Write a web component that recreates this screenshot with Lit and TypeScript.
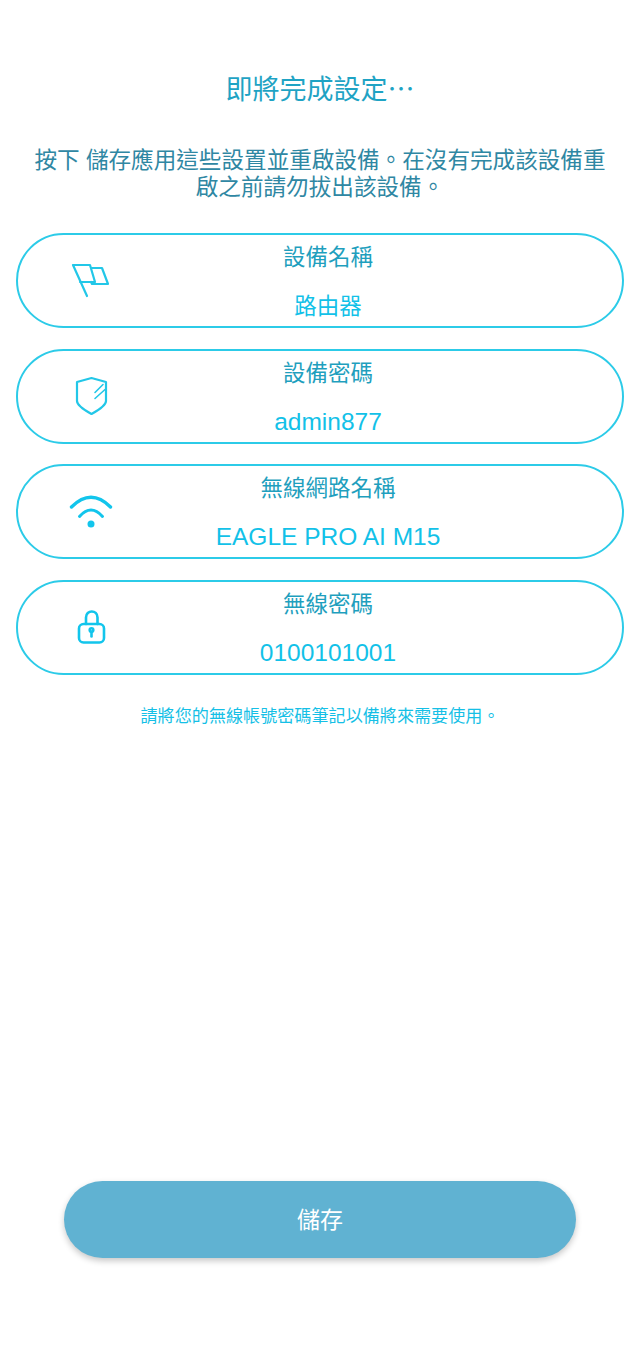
import { LitElement, html, css } from "lit";
import { customElement } from "lit/decorators.js";

const flag = html`<svg width="44" height="44" viewBox="0 0 44 44" fill="none" stroke="#22c7e8" stroke-width="2.200" stroke-linejoin="round" stroke-linecap="round"><path d="M18 37 L4 6 H21 L26 23 H11"/><path d="M23 9 H33 L39 25 H23 L22 23"/></svg>`;
const shield = html`<svg width="44" height="44" viewBox="0 0 44 44" fill="none" stroke="#22c7e8" stroke-width="2.200" stroke-linejoin="round" stroke-linecap="round"><path d="M22.500 4 L37 8 V27 C37 32 28 37 22.500 40 C17 37 8 32 8 27 V8 Z"/><path d="M26 18.500 L34 10.500M26 24.500 L36 15.500" stroke-width="1.600"/></svg>`;
const wifi = html`<svg width="44" height="44" viewBox="0 0 44 44" fill="none" stroke="#12c5ec" stroke-width="3.400" stroke-linecap="round"><path d="M2.500 17 Q22 -2.400 41.500 17"/><path d="M10.500 26.500 Q22 13.500 33.500 26.500" stroke-width="3"/><circle cx="22" cy="34" r="3.500" fill="#12c5ec" stroke="none"/></svg>`;
const lock = html`<svg width="44" height="44" viewBox="0 0 44 44" fill="none" stroke="#12c5ec" stroke-width="2.600" stroke-linecap="round"><rect x="10" y="19" width="25" height="18.500" rx="4.500"/><path d="M17 19 V12.500 C17 4.500 28.500 4.500 28.500 12.500 V19"/><circle cx="22.500" cy="25" r="1.800"/><path d="M22.500 26.500 V31.500"/></svg>`;

const rows = [
  { icon: flag, label: "設備名稱", value: "路由器", cjk: true },
  { icon: shield, label: "設備密碼", value: "admin877", cjk: false },
  { icon: wifi, label: "無線網路名稱", value: "EAGLE PRO AI M15", cjk: false },
  { icon: lock, label: "無線密碼", value: "0100101001", cjk: false },
];

@customElement("app-root")
export class AppRoot extends LitElement {
  static styles = css`
    :host {
      display: flex;
      flex-direction: column;
      width: 640px;
      height: 1352px;
      background: #fff;
      font-family: "Liberation Sans", "Noto Sans CJK TC", sans-serif;
      box-sizing: border-box;
    }
    h1 {
      margin: 70px 0 0;
      font-family: "Noto Sans CJK TC", sans-serif;
      font-size: 27px;
      line-height: 36px;
      font-weight: 400;
      color: #1fa3c4;
      text-align: center;
    }
    .intro {
      margin: 41px 32px 0;
      font-size: 22.6px;
      line-height: 27px;
      color: #2f87a3;
      text-align: center;
    }
    .cards {
      display: flex;
      flex-direction: column;
      gap: 20.6px;
      margin: 32px 16px 0;
    }
    .card {
      display: grid;
      grid-template-columns: 146px 1fr 130px;
      align-items: center;
      height: 95px;
      box-sizing: border-box;
      border: 2px solid #2ccbe8;
      border-radius: 48px;
    }
    .icon {
      display: flex;
      justify-content: center;
    }
    .text {
      display: flex;
      flex-direction: column;
      align-items: center;
      gap: 17px;
      padding-top: 4px;
      white-space: nowrap;
    }
    .label {
      font-size: 22.5px;
      line-height: 32px;
      color: #1f9fbe;
    }
    .value {
      margin: -1px 0 1px;
      font-size: 24.5px;
      line-height: 32px;
      color: #12c1e8;
    }
    .value.cjk {
      margin: 0;
      font-size: 22.5px;
    }
    .note {
      margin: 30px 0 0;
      font-size: 17.1px;
      line-height: 24px;
      color: #15bfe6;
      text-align: center;
    }
    button {
      margin: auto 64px 94px;
      height: 77px;
      padding: 0 0 3px;
      border: 0;
      border-radius: 39px;
      background: #60b2d2;
      color: #fff;
      font: inherit;
      font-size: 23px;
      box-shadow: 0 3px 6px rgba(0, 0, 0, 0.22);
    }
  `;

  render() {
    return html`
      <h1>即將完成設定…</h1>
      <p class="intro">按下 儲存應用這些設置並重啟設備。在沒有完成該設備重啟之前請勿拔出該設備。</p>
      <div class="cards">
        ${rows.map(
          (r) => html`<div class="card">
            <div class="icon">${r.icon}</div>
            <div class="text">
              <div class="label">${r.label}</div>
              <div class="value ${r.cjk ? "cjk" : ""}">${r.value}</div>
            </div>
          </div>`
        )}
      </div>
      <p class="note">請將您的無線帳號密碼筆記以備將來需要使用。</p>
      <button>儲存</button>
    `;
  }
}
